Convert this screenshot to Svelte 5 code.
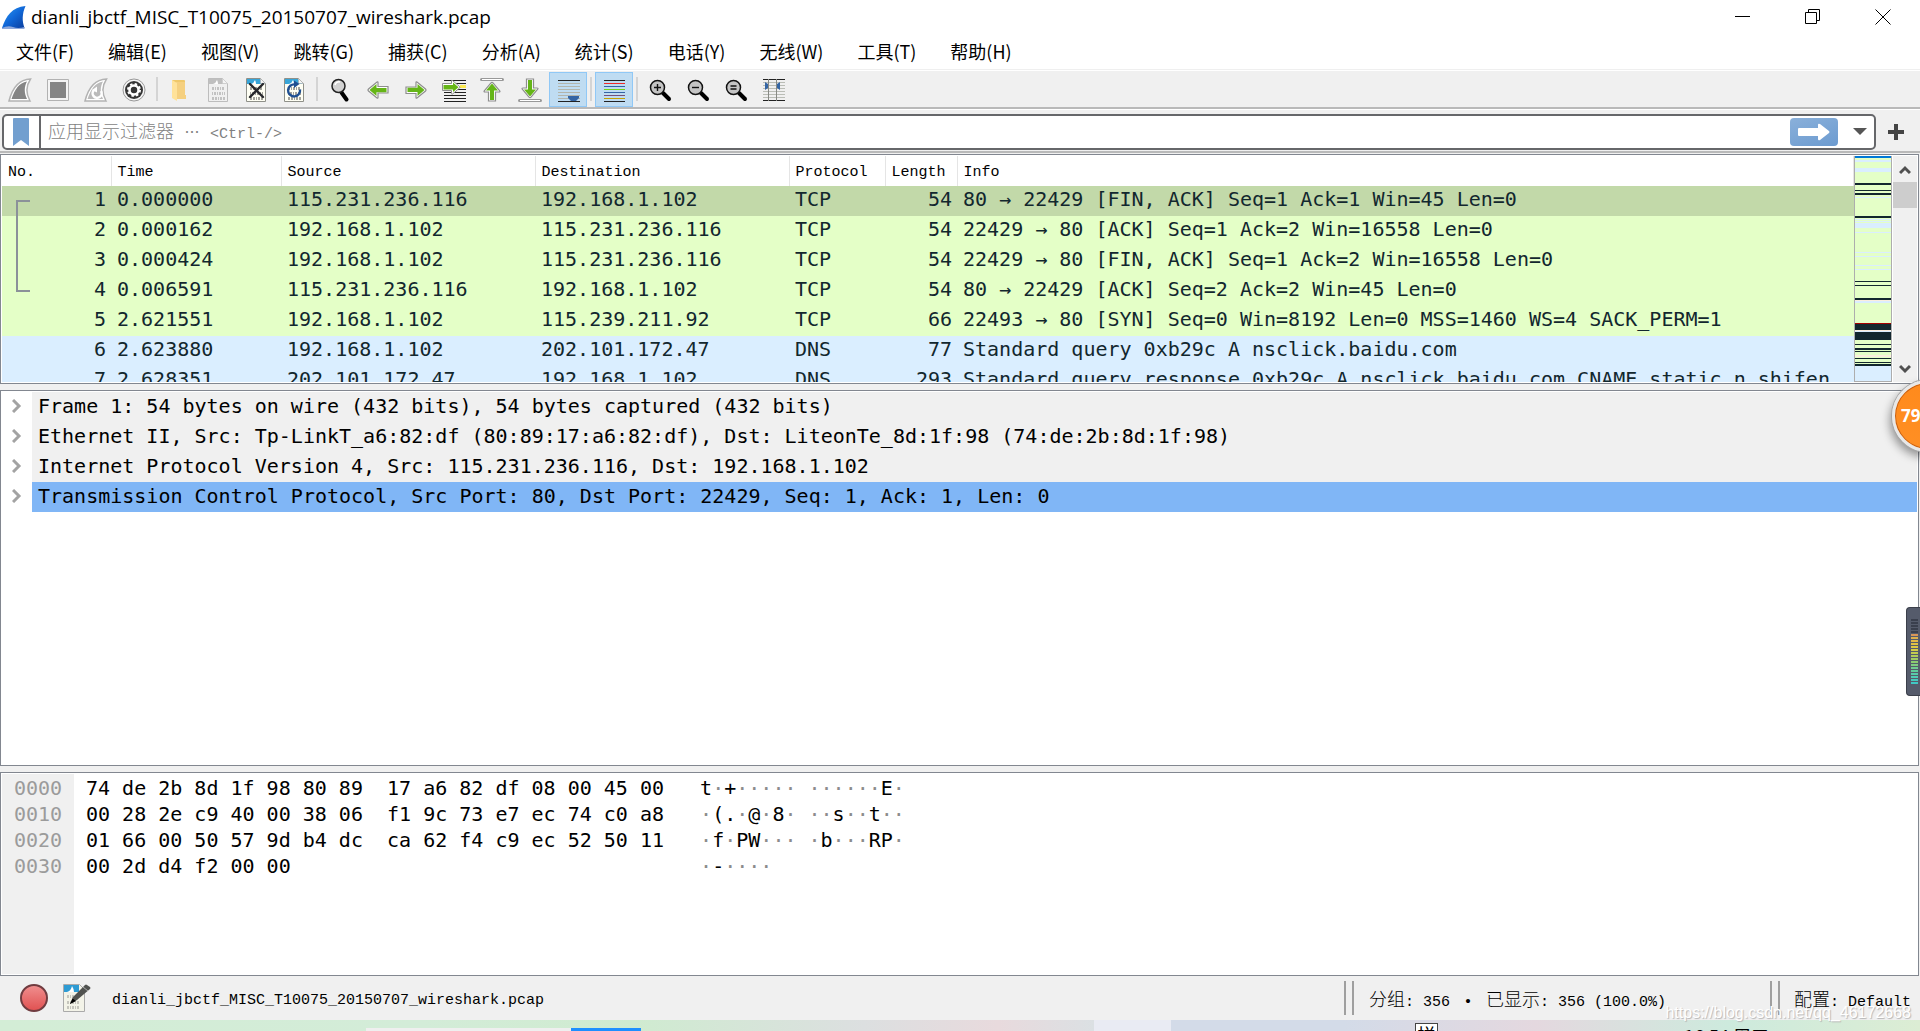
<script>
  const menus = ['文件(F)', '编辑(E)', '视图(V)', '跳转(G)', '捕获(C)', '分析(A)', '统计(S)', '电话(Y)', '无线(W)', '工具(T)', '帮助(H)'];

  const tools = [
    ['start', '开始捕获'], ['stop', '停止捕获'], ['restart', '重新开始捕获'], ['options', '捕获选项'], null,
    ['folder', '打开'], ['save', '保存'], ['close', '关闭文件'], ['reload', '重新加载'], null,
    ['find', '查找分组'], ['back', '上一分组'], ['forward', '下一分组'], ['goto', '转到分组'],
    ['first', '首个分组'], ['last', '最新分组'], ['auto', '自动滚动', true], null,
    ['colorize', '着色', true], null,
    ['zoomin', '放大'], ['zoomout', '缩小'], ['zoomreset', '正常大小'], ['columns', '调整列宽']
  ];

  const columns = ['No.', 'Time', 'Source', 'Destination', 'Protocol', 'Length', 'Info'];
  const packets = [
    ['1', '0.000000', '115.231.236.116', '192.168.1.102', 'TCP', '54', '80 → 22429 [FIN, ACK] Seq=1 Ack=1 Win=45 Len=0'],
    ['2', '0.000162', '192.168.1.102', '115.231.236.116', 'TCP', '54', '22429 → 80 [ACK] Seq=1 Ack=2 Win=16558 Len=0'],
    ['3', '0.000424', '192.168.1.102', '115.231.236.116', 'TCP', '54', '22429 → 80 [FIN, ACK] Seq=1 Ack=2 Win=16558 Len=0'],
    ['4', '0.006591', '115.231.236.116', '192.168.1.102', 'TCP', '54', '80 → 22429 [ACK] Seq=2 Ack=2 Win=45 Len=0'],
    ['5', '2.621551', '192.168.1.102', '115.239.211.92', 'TCP', '66', '22493 → 80 [SYN] Seq=0 Win=8192 Len=0 MSS=1460 WS=4 SACK_PERM=1'],
    ['6', '2.623880', '192.168.1.102', '202.101.172.47', 'DNS', '77', 'Standard query 0xb29c A nsclick.baidu.com'],
    ['7', '2.628351', '202.101.172.47', '192.168.1.102', 'DNS', '293', 'Standard query response 0xb29c A nsclick.baidu.com CNAME static.n.shifen']
  ];

  const layers = [
    'Frame 1: 54 bytes on wire (432 bits), 54 bytes captured (432 bits)',
    'Ethernet II, Src: Tp-LinkT_a6:82:df (80:89:17:a6:82:df), Dst: LiteonTe_8d:1f:98 (74:de:2b:8d:1f:98)',
    'Internet Protocol Version 4, Src: 115.231.236.116, Dst: 192.168.1.102',
    'Transmission Control Protocol, Src Port: 80, Dst Port: 22429, Seq: 1, Ack: 1, Len: 0'
  ];

  const bytes = [
    ['0000', '74 de 2b 8d 1f 98 80 89  17 a6 82 df 08 00 45 00', 't·+····· ······E·'],
    ['0010', '00 28 2e c9 40 00 38 06  f1 9c 73 e7 ec 74 c0 a8', '·(.·@·8· ··s··t··'],
    ['0020', '01 66 00 50 57 9d b4 dc  ca 62 f4 c9 ec 52 50 11', '·f·PW··· ·b···RP·'],
    ['0030', '00 2d d4 f2 00 00', '·-····']
  ];

  const dark = '#12272e';
  const pale = '#daeeff';
  const cream = '#fbeede';
  const stripes = [
    [0, 2, '#0078d7'], [4, 2, pale], [12, 4, pale], [27, 2, dark], [34, 1, dark], [37, 2, dark], [41, 1, pale],
    [60, 2, dark], [63, 1, pale], [65, 1, pale], [67, 5, pale], [76, 1, pale], [96, 1, pale], [100, 1, pale],
    [109, 1, pale], [113, 1, pale], [125, 1, dark], [129, 1, dark], [142, 2, dark], [144, 1, cream], [145, 2, pale],
    [167, 1, '#a40000'], [168, 6, dark], [174, 1, cream], [175, 1, pale], [176, 8, dark], [188, 1, dark],
    [192, 2, dark], [195, 1, dark], [199, 2, cream], [202, 1, dark], [206, 1, dark], [208, 2, dark], [210, 15, pale]
  ];

  const ruleLines = ['#222', '#ef2929', '#3465a4', '#73d216', '#3465a4', '#75507b', '#c4a000', '#222'];
  const meter = ['#3a3f4d', '#3a3f4d', '#3a3f4d', '#3a3f4d', '#3a3f4d', '#d8965a', '#deb04c', '#e0b848', '#e0c244', '#dcc844', '#d2cc48', '#c2cc50', '#b0cc58', '#a0cc64', '#8ccc70', '#80cc80', '#70cc90', '#60cc9c', '#58ccaa', '#50ccb4', '#48c8bc', '#40c8c4'];
</script>

{#snippet page(gray)}
  <path d="M2.5 .5h14l5 5v18h-19z" fill={gray ? '#f0f0f0' : '#fffff4'} stroke={gray ? '#bdbdbd' : '#8f9089'} />
  <path d="M3 1h13l5 5H3z" fill={gray ? '#bfbfbf' : '#38a5d8'} />
  <path d="M7 6q3-1 4-4 1 2 1 4z" fill="#fff" />
  <path d="M16.500 .5v5h5z" fill="#f5f5f5" stroke={gray ? '#c8c8c8' : '#aaa'} stroke-width=".6" />
  <g stroke={gray ? '#c2c2c2' : '#a3a39c'} stroke-width="3" fill="none">
    <path d="M6 10.500h13" stroke-dasharray="2 1 1 1" />
    <path d="M6 15.500h13" stroke-dasharray="1 1 2 1" />
    <path d="M6 20.500h13" stroke-dasharray="2 1 2 1 1 1" />
  </g>
{/snippet}

{#snippet lens(sign)}
  <path d="M15 15l6 6" stroke="#000" stroke-width="4" stroke-linecap="round" />
  <circle cx="9.500" cy="9.500" r="7" fill="#c4c4c4" stroke="#111" stroke-width="1.500" />
  <path d={sign} stroke="#111" stroke-width="1.400" fill="none" />
{/snippet}

{#snippet arrow(angle)}
  <g transform="rotate({angle} 12 12)">
    <path d="M2 9h10V4.500q0-1 1-.5l8.500 7q1 1 0 2l-8.500 7q-1 .5-1-.5V15.500H2z" fill="#fff" stroke="#8e8e8e" stroke-width="1.200" />
    <path d="M3.500 9.800h10V6l7 6-7 6v-4h-10z" fill="#65b517" />
  </g>
{/snippet}

{#snippet icon(name)}
  <svg width="24" height="24" viewBox="0 0 24 24" aria-hidden="true">
    {#if name === 'start' || name === 'restart'}
      <path d="M1 23C4 11 10 1.500 22.500 1 18 8 18 16 22 23z" fill="#fff" stroke="#b2b2b2" stroke-width="1.500" />
      <path d="M3.500 21C7 11 11 5 19 3.500 16 9 16 15 19 21z" fill={name === 'start' ? '#858585' : '#bbb'} />
      {#if name === 'restart'}
        <path d="M10 12a4.500 4.500 0 1 0 7 1" fill="none" stroke="#fff" stroke-width="2.500" />
        <path d="M8 12l5-3.500v6z" fill="#fff" />
      {/if}
    {:else if name === 'stop'}
      <path d="M1.500 1.500h21v21h-21z" fill="#f4f4f4" stroke="#b2b2b2" />
      <path d="M4 4h16v16H4z" fill="#858585" />
    {:else if name === 'options'}
      <circle cx="12" cy="12" r="11" fill="#f6f6f6" stroke="#999" />
      <circle cx="12" cy="12" r="9" fill="#353535" />
      <circle cx="12" cy="12" r="4.500" fill="none" stroke="#fff" stroke-width="2.500" />
      <circle cx="12" cy="12" r="6" fill="none" stroke="#fff" stroke-width="2" stroke-dasharray="2.400 2.312" />
      <circle cx="12" cy="12" r="2.600" fill="#353535" />
    {:else if name === 'folder'}
      <path d="M4 2h12q1 0 1 1v18H8z" fill="#efc86a" />
      <path d="M8 4h9v13h1v4H8z" fill="#f5d080" />
      <path d="M4 2l5 3v18l-5-3z" fill="#ffe29a" />
    {:else if name === 'save'}
      {@render page(true)}
    {:else if name === 'close'}
      {@render page(false)}
      <path d="M6 6l13 13M19 6L6 19" stroke="#27282c" stroke-width="2.400" stroke-linecap="round" />
    {:else if name === 'reload'}
      {@render page(false)}
      <path d="M13 6.500a6 6 0 1 0 5 5" fill="none" stroke="#1f4f92" stroke-width="2.400" />
      <path d="M12 2.500l5.500 3.500-5.500 4z" fill="#1f4f92" />
    {:else if name === 'find'}
      <path d="M13.500 14.500l5 7" stroke="#000" stroke-width="4" stroke-linecap="round" />
      <circle cx="10.500" cy="8" r="6.500" fill="#d2d2d2" stroke="#222" stroke-width="1.500" />
      <path d="M7 7a4 4 0 0 1 5-3" stroke="#fff" stroke-width="1.500" fill="none" />
    {:else if name === 'back'}
      {@render arrow(180)}
    {:else if name === 'forward'}
      {@render arrow(0)}
    {:else if name === 'goto'}
      <path d="M2 2.500h22M2 5.500h22M2 14.500h22M2 17.500h22M2 20.500h22M2 23.500h22M15 11.500h9" stroke="#222" stroke-width="1" />
      <path d="M18 7h6v3h-6z" fill="#fce94f" />
      <path d="M.5 5.500h9V3q0-1 1-.5l7 6q1 .5 0 1.500l-7 6q-1 .5-1-.5v-3h-9z" fill="#fff" stroke="#8e8e8e" />
      <path d="M1.500 7h9.500V4.500l5.500 4.700-5.500 4.800v-2.500H1.500z" fill="#65b517" />
    {:else if name === 'first' || name === 'last'}
      <g transform={name === 'last' ? 'rotate(180 12 12)' : ''}>
        <path d="M1.500 1.500h21" stroke="#999" stroke-width="3" stroke-linecap="round" />
        <path d="M2 1.500h20" stroke="#fff" />
        <path d="M8.500 23V14H5q-1.500 0-.7-1.200l6.700-8q1-1 2 0l6.700 8q.8 1.200-.7 1.200h-3.500v9z" fill="#fff" stroke="#8e8e8e" stroke-width="1.200" />
        <path d="M10 22v-9.500H6l6-7 6 7h-4V22z" fill="#65b517" />
      </g>
    {:else if name === 'auto'}
      <path d="M2 5.500h22M2 8.500h22M2 11.500h22M2 14.500h22M2 17.500h22M2 20.500h22" stroke="#b3b5ac" />
      <path d="M2 2.500h22M2 23.500h22" stroke="#222" />
      <path d="M12 18h11v2l-3 3h-5l-3-3z" fill="#3465a4" />
    {:else if name === 'colorize'}
      {#each ruleLines as color, i}
        <rect x="2" y={2 + i * 3} width="21" height="1" fill={color} />
      {/each}
    {:else if name === 'zoomin'}
      {@render lens('M6 9.500h7M9.500 6v7')}
    {:else if name === 'zoomout'}
      {@render lens('M6 9.500h7')}
    {:else if name === 'zoomreset'}
      {@render lens('M6.500 8h6M6.500 11h6')}
    {:else if name === 'columns'}
      <path d="M1 4.500h22M1 7.500h22M1 10.500h22M1 13.500h22M1 16.500h22M1 19.500h22" stroke="#babdb6" />
      <path d="M1 1.500h22M1 22.500h22" stroke="#222" />
      <path d="M6.500 1v22M14.500 1v22" stroke="#888a85" />
      <path d="M3 4l3 2v4l-3 2zM18 4l-3 2v4l3 2z" fill="#3465a4" />
    {/if}
  </svg>
{/snippet}

<div class="window">
  <header class="titlebar">
    <svg class="logo" width="24" height="24" viewBox="0 0 24 24" aria-hidden="true">
      <defs>
        <linearGradient id="fin" x1="0" y1="0" x2="1" y2="1">
          <stop offset="0" stop-color="#2c9cf4" /><stop offset=".5" stop-color="#1168d8" /><stop offset="1" stop-color="#0a3c9c" />
        </linearGradient>
      </defs>
      <path d="M0 22C4 10 10 1 23.500 0 20 8 20 15 22.500 22z" fill="url(#fin)" />
      <path d="M0 22q6-3 11-1t11.500 0v2H0z" fill="#8fa9dc" />
    </svg>
    <h1>dianli_jbctf_MISC_T10075_20150707_wireshark.pcap</h1>
    <div class="controls">
      <button aria-label="最小化"><svg width="16" height="16" viewBox="0 0 16 16"><path d="M0 7.500h15" stroke="#000" /></svg></button>
      <button aria-label="还原"><svg width="16" height="16" viewBox="0 0 16 16"><path d="M.5 3.500h11v11H.5zM3.500 3.500v-3h11v11h-3" fill="none" stroke="#000" /></svg></button>
      <button aria-label="关闭"><svg width="16" height="16" viewBox="0 0 16 16"><path d="M.5.5l15 15M15.500.5l-15 15" stroke="#000" /></svg></button>
    </div>
  </header>

  <nav class="menubar">
    {#each menus as menu}
      <button>{menu}</button>
    {/each}
  </nav>

  <div class="toolbar">
    {#each tools as tool}
      {#if tool}
        <button class="tool" class:on={tool[2]} aria-label={tool[1]}>{@render icon(tool[0])}</button>
      {:else}
        <span class="sep"></span>
      {/if}
    {/each}
  </div>

  <div class="filterbar">
    <div class="filter">
      <button class="bookmark" aria-label="书签">
        <svg width="16" height="28" viewBox="0 0 16 28"><path d="M0 1q0-1 1-1h14q1 0 1 1v27l-8-6-8 6z" fill="#729fcf" /></svg>
      </button>
      <div class="field">
        <label for="filter"><span class="cjk">应用显示过滤器</span> <span class="wide">⋯</span> &lt;Ctrl-/&gt;</label>
        <input id="filter" type="text" />
      </div>
      <button class="apply" aria-label="应用">
        <svg width="34" height="18" viewBox="0 0 34 18"><path d="M2 5h19V2q0-2 2-1l9 7q1 1 0 2l-9 7q-2 1-2-1v-3H2q-1 0-1-1V6q0-1 1-1z" fill="#fff" /></svg>
      </button>
      <button class="caret" aria-label="历史">
        <svg width="14" height="8" viewBox="0 0 14 8"><path d="M0 0h14L7 7z" fill="#555" /></svg>
      </button>
    </div>
    <button class="plus" aria-label="添加">
      <svg width="16" height="16" viewBox="0 0 16 16"><path d="M8 0v16M0 8h16" stroke="#444" stroke-width="4" /></svg>
    </button>
  </div>

  <main>
    <section class="pane packets">
      <div class="list">
        <table>
          <colgroup>
            <col class="c-no" /><col class="c-time" /><col class="c-addr" /><col class="c-addr" /><col class="c-proto" /><col class="c-len" /><col />
          </colgroup>
          <thead>
            <tr>{#each columns as column}<th>{column}</th>{/each}</tr>
          </thead>
          <tbody>
            {#each packets as packet, i}
              <tr class:selected={i === 0} class:dns={packet[4] === 'DNS'}>
                {#each packet as cell, c}<td class:num={c === 0 || c === 5}>{cell}</td>{/each}
              </tr>
            {/each}
          </tbody>
        </table>
        <span class="bracket"></span>
      </div>
      <svg class="minimap" viewBox="0 0 36 225" preserveAspectRatio="none" shape-rendering="crispEdges" aria-hidden="true">
        {#each stripes as [y, height, color]}
          <rect x="0" {y} width="36" {height} fill={color} />
        {/each}
      </svg>
      <div class="scrollbar">
        <svg width="12" height="10" viewBox="0 0 12 10" aria-hidden="true"><path d="M1 8l5-5 5 5" fill="none" stroke="#505050" stroke-width="3" /></svg>
        <span class="thumb"></span>
        <svg width="12" height="10" viewBox="0 0 12 10" aria-hidden="true"><path d="M1 2l5 5 5-5" fill="none" stroke="#505050" stroke-width="3" /></svg>
      </div>
    </section>

    <section class="pane details">
      <ul>
        {#each layers as layer, i}
          <li>
            <button aria-label="展开"><svg width="10" height="14" viewBox="0 0 10 14"><path d="M1 1l6 6-6 6" fill="none" stroke="#a3a3a3" stroke-width="3" /></svg></button>
            <span class="layer" class:current={i === 3}>{layer}</span>
          </li>
        {/each}
      </ul>
    </section>

    <section class="pane hex">
      <div class="offsets">
        {#each bytes as row}<div>{row[0]}</div>{/each}
      </div>
      <div class="dump">
        {#each bytes as row}
          <div>{row[1].padEnd(51)}{#each row[2] as ch}{#if ch === '·'}<i>·</i>{:else}{ch}{/if}{/each}</div>
        {/each}
      </div>
    </section>
  </main>

  <footer class="status">
    <button aria-label="专家信息">
      <svg width="28" height="28" viewBox="0 0 28 28">
        <defs><linearGradient id="led" x1="0" y1="0" x2="0" y2="1"><stop offset="0" stop-color="#f09090" /><stop offset="1" stop-color="#e05050" /></linearGradient></defs>
        <circle cx="14" cy="14" r="13" fill="url(#led)" stroke="#703c40" stroke-width="2" />
      </svg>
    </button>
    <button class="note" aria-label="捕获文件属性">
      <svg width="28" height="28" viewBox="0 0 28 28">
        <path d="M.5.5h16l5 5v22H.5z" fill="#f3f3e8" stroke="#aaa" />
        <path d="M1 1h15v7H1z" fill="#2e9bd3" />
        <path d="M4 8q4-1 5-6 2 3 2 6z" fill="#fff" />
        <path d="M4 12.500h13M4 18.500h13M4 23.500h13" stroke="#c5c5bd" stroke-width="3" stroke-dasharray="2 1 1 1" />
        <path d="M7 20l3-7L22 1q1-1 2 0l3 2q1 1 0 2L14 16z" fill="#50524f" />
        <path d="M7 20l2.500-5.500L13 17z" fill="#000" />
        <path d="M20 3l5 4" stroke="#aaa" />
      </svg>
    </button>
    <span class="file">dianli_jbctf_MISC_T10075_20150707_wireshark.pcap</span>
    <span class="grip"></span>
    <span class="count"><span class="cjk">分组</span>: 356 <span class="wide">•</span> <span class="cjk">已显示</span>: 356 (100.0%)</span>
    <span class="grip"></span>
    <span class="profile"><span class="cjk">配置</span>: Default</span>
  </footer>

  <div class="taskbar">
    <span class="task"></span><span class="task active"></span>
    <span class="ime">拼</span>
    <span class="clock">16:54 周三</span>
  </div>

  <div class="watermark">https://blog.csdn.net/qq_46172668</div>
  <div class="badge">79</div>
  <div class="meter">
    {#each meter as color}<span style:background={color}></span>{/each}
  </div>
</div>

<style>
  :global(body) {
    overflow: hidden;
    background: #f0f0f0;
  }

  .window {
    position: relative;
    display: flex;
    flex-direction: column;
    height: 100vh;
    overflow: hidden;
    color: #000;
    font-family: "Liberation Mono", "Noto Sans CJK SC", monospace;
    font-size: 15px;
  }

  button {
    display: flex;
    align-items: center;
    justify-content: center;
    margin: 0;
    padding: 0;
    border: 0;
    background: none;
    color: inherit;
    font: inherit;
  }

  svg {
    display: block;
    flex: none;
  }

  .titlebar {
    display: flex;
    align-items: center;
    height: 35px;
    padding: 0 2px;
    background: #fff;
  }

  h1 {
    flex: 1;
    margin: 0 0 0 5px;
    font: 400 19px/35px "Open Sans", "Noto Sans", sans-serif;
  }

  .controls {
    display: flex;
    height: 33px;
    align-self: flex-start;
  }

  .controls button {
    width: 70px;
  }

  .menubar {
    display: flex;
    gap: 34px;
    height: 34px;
    padding: 0 16px;
    border-bottom: 1px solid #efefef;
    background: #fff;
    font: 18px/32px "Noto Sans CJK SC", sans-serif;
  }

  .menubar button {
    height: 32px;
  }

  .toolbar {
    display: flex;
    height: 35px;
    padding: 1px 1px 0;
    border-top: 1px solid #fff;
    border-bottom: 2px solid #b9b9b9;
    background: #f0f0f0;
  }

  .tool {
    box-sizing: border-box;
    width: 38px;
    height: 35px;
  }

  .on {
    border: 1px solid #90c8f6;
    background: #bfdcf2;
  }

  .sep {
    width: 2px;
    height: 24px;
    margin: 5px 3px;
    background: #d4d4d4;
  }

  .filterbar {
    display: flex;
    align-items: center;
    height: 38px;
    padding: 3px 0 0 2px;
    border-top: 1px solid #fff;
    border-bottom: 2px solid #b9b9b9;
    background: #f0f0f0;
  }

  .filter {
    display: flex;
    flex: 1;
    align-items: center;
    box-sizing: border-box;
    height: 36px;
    border: 2px solid #66676a;
    border-radius: 5px;
    background: #fff;
  }

  .bookmark {
    width: 33px;
    height: 32px;
    padding-right: 2px;
    border-right: 2px solid #66676a;
    box-sizing: content-box;
  }

  .field {
    display: grid;
    flex: 1;
    align-items: center;
    padding-left: 7px;
    color: #7f7f7f;
  }

  .field label,
  .field input {
    grid-area: 1 / 1;
  }

  .field label {
    line-height: 32px;
  }

  .field input {
    height: 32px;
    padding: 0;
    border: 0;
    outline: 0;
    background: transparent;
    font: inherit;
  }

  .cjk {
    font-family: "Noto Sans CJK SC", sans-serif;
    font-size: 18px;
    font-weight: 300;
  }

  .wide {
    display: inline-block;
    width: 18px;
    text-align: center;
  }

  .apply {
    width: 48px;
    height: 28px;
    margin-right: 8px;
    border-radius: 4px;
    background: linear-gradient(160deg, #8ab0da, #6c9bd0);
  }

  .caret {
    width: 28px;
    height: 28px;
  }

  .plus {
    width: 40px;
    height: 36px;
    margin-right: 4px;
  }

  main {
    display: flex;
    flex: 1;
    flex-direction: column;
    gap: 6px;
    min-height: 0;
    padding: 1px 1px 0 0;
    font: 20px/30px "DejaVu Sans Mono", monospace;
  }

  .pane {
    display: flex;
    box-sizing: border-box;
    min-height: 0;
    overflow: hidden;
    border: 1px solid #828790;
    background: #fff;
  }

  .packets {
    flex: 226 1 0;
    padding: 1px;
  }

  .details {
    flex: 372 1 0;
    padding: 1px;
    line-height: 28px;
  }

  .hex {
    flex: 200 1 0;
    padding: 1px;
    line-height: 26px;
  }

  .list {
    position: relative;
    flex: 1;
    min-width: 0;
    overflow: hidden;
  }

  table {
    width: 100%;
    border-collapse: collapse;
    table-layout: fixed;
  }

  .c-no { width: 109px; }
  .c-time { width: 170px; }
  .c-addr { width: 254px; }
  .c-proto { width: 96px; }
  .c-len { width: 72px; }

  th {
    height: 30px;
    padding: 4px 0 0 6px;
    border-right: 1px solid #e5e5e5;
    font: 400 15px/26px "Liberation Mono", monospace;
    text-align: left;
    white-space: nowrap;
  }

  td {
    height: 30px;
    padding: 0 0 4px 6px;
    color: #12272e;
    line-height: 26px;
    white-space: nowrap;
  }

  td,
  th {
    box-sizing: border-box;
    overflow: hidden;
  }

  td.num {
    padding: 0 5px 4px 0;
    text-align: right;
  }

  tbody tr { background: #e4ffc7; }
  tbody .selected { background: #c2d9a9; }
  tbody .dns { background: #daeeff; }

  .bracket {
    position: absolute;
    top: 44px;
    left: 14px;
    width: 12px;
    height: 88px;
    border: 2px solid #8b9199;
    border-right: 0;
  }

  .minimap {
    width: 36px;
    height: auto;
    border: 1px solid #adadad;
    border-top: 0;
    background: #e4ffc7;
  }

  .scrollbar {
    display: flex;
    flex-direction: column;
    align-items: center;
    width: 24px;
    margin-left: 1px;
    padding: 9px 0 8px;
    background: #f0f0f0;
  }

  .thumb {
    width: 24px;
    height: 26px;
    margin: 7px 0 auto;
    background: #cdcdcd;
  }

  ul {
    flex: 1;
    margin: 0;
    padding: 0;
    list-style: none;
  }

  li {
    display: flex;
    height: 30px;
  }

  li button {
    width: 30px;
    height: 28px;
  }

  .layer {
    flex: 1;
    padding-left: 6px;
    background: #f0f0f0;
    white-space: pre;
  }

  .current {
    background: #80b6f6;
  }

  .offsets {
    width: 60px;
    padding: 1px 0 0 12px;
    background: #f0f0f0;
    color: #9b9b9b;
  }

  .dump {
    flex: 1;
    padding: 1px 0 0 12px;
    white-space: pre;
  }

  i {
    color: #8c8c8c;
    font-style: normal;
  }

  .status {
    display: flex;
    align-items: center;
    height: 44px;
    padding: 0 8px 0 20px;
    background: #f0f0f0;
  }

  .note {
    margin-left: 15px;
  }

  .file {
    flex: 1;
    margin-left: 21px;
    padding-top: 4px;
  }

  .grip {
    width: 6px;
    height: 34px;
    border: solid #9f9f9f;
    border-width: 0 2px;
  }

  .count {
    width: 401px;
    margin-left: 15px;
  }

  .profile {
    width: 118px;
    margin-left: 14px;
  }

  .taskbar {
    display: flex;
    height: 11px;
    overflow: hidden;
    background: linear-gradient(90deg, #d3edd6, #d3ecd8 22%, #cfebd0 33%, #dcdfe0 45%, #e8dadd 52%, #dbe0e3 57%, #e9ebf3 57%, #e9ebf3 61%, #d3dbe8 61%, #d3dbe8 70%, #e4d8df 80%, #cdeadd 90%, #dcedd4);
  }

  .task {
    width: 205px;
    height: 3px;
    margin: 8px 0 0 366px;
    background: #efefef;
  }

  .active {
    width: 70px;
    margin-left: 0;
    background: #1e8fff;
  }

  .ime {
    width: 21px;
    height: 24px;
    margin: 3px 246px 0 auto;
    border: 1px solid #444;
    background: #fff;
    font: 18px/20px "Noto Sans CJK SC", sans-serif;
    text-align: center;
  }

  .clock {
    width: 236px;
    margin-top: 6px;
    font: 18px/20px "Noto Sans CJK SC", sans-serif;
  }

  .watermark {
    position: absolute;
    right: 9px;
    bottom: 8px;
    color: #fff;
    font: 16px/20px "Liberation Sans", sans-serif;
    text-shadow: 1px 1px 1px #b5b5b5;
  }

  .badge {
    position: absolute;
    top: 380px;
    right: -44px;
    box-sizing: border-box;
    width: 72px;
    height: 72px;
    padding-left: 6px;
    border: 3px solid #e8e8e8;
    border-radius: 50%;
    background: linear-gradient(#ff8a1c, #ff8f24);
    box-shadow: inset 0 0 0 1px #c65f14, 0 0 0 1px #a8a8a8, -2px 5px 10px #0006;
    color: #fff;
    font: 700 17px/66px "Open Sans", sans-serif;
  }

  .meter {
    position: absolute;
    top: 607px;
    right: 0;
    display: flex;
    flex-direction: column;
    gap: 1px;
    box-sizing: border-box;
    width: 14px;
    height: 89px;
    padding: 11px 2px 0 4px;
    border: 1px solid #3b3f4a;
    border-right: 0;
    border-radius: 4px 0 0 4px;
    background: #555b6b;
  }

  .meter span {
    height: 2px;
  }
</style>
